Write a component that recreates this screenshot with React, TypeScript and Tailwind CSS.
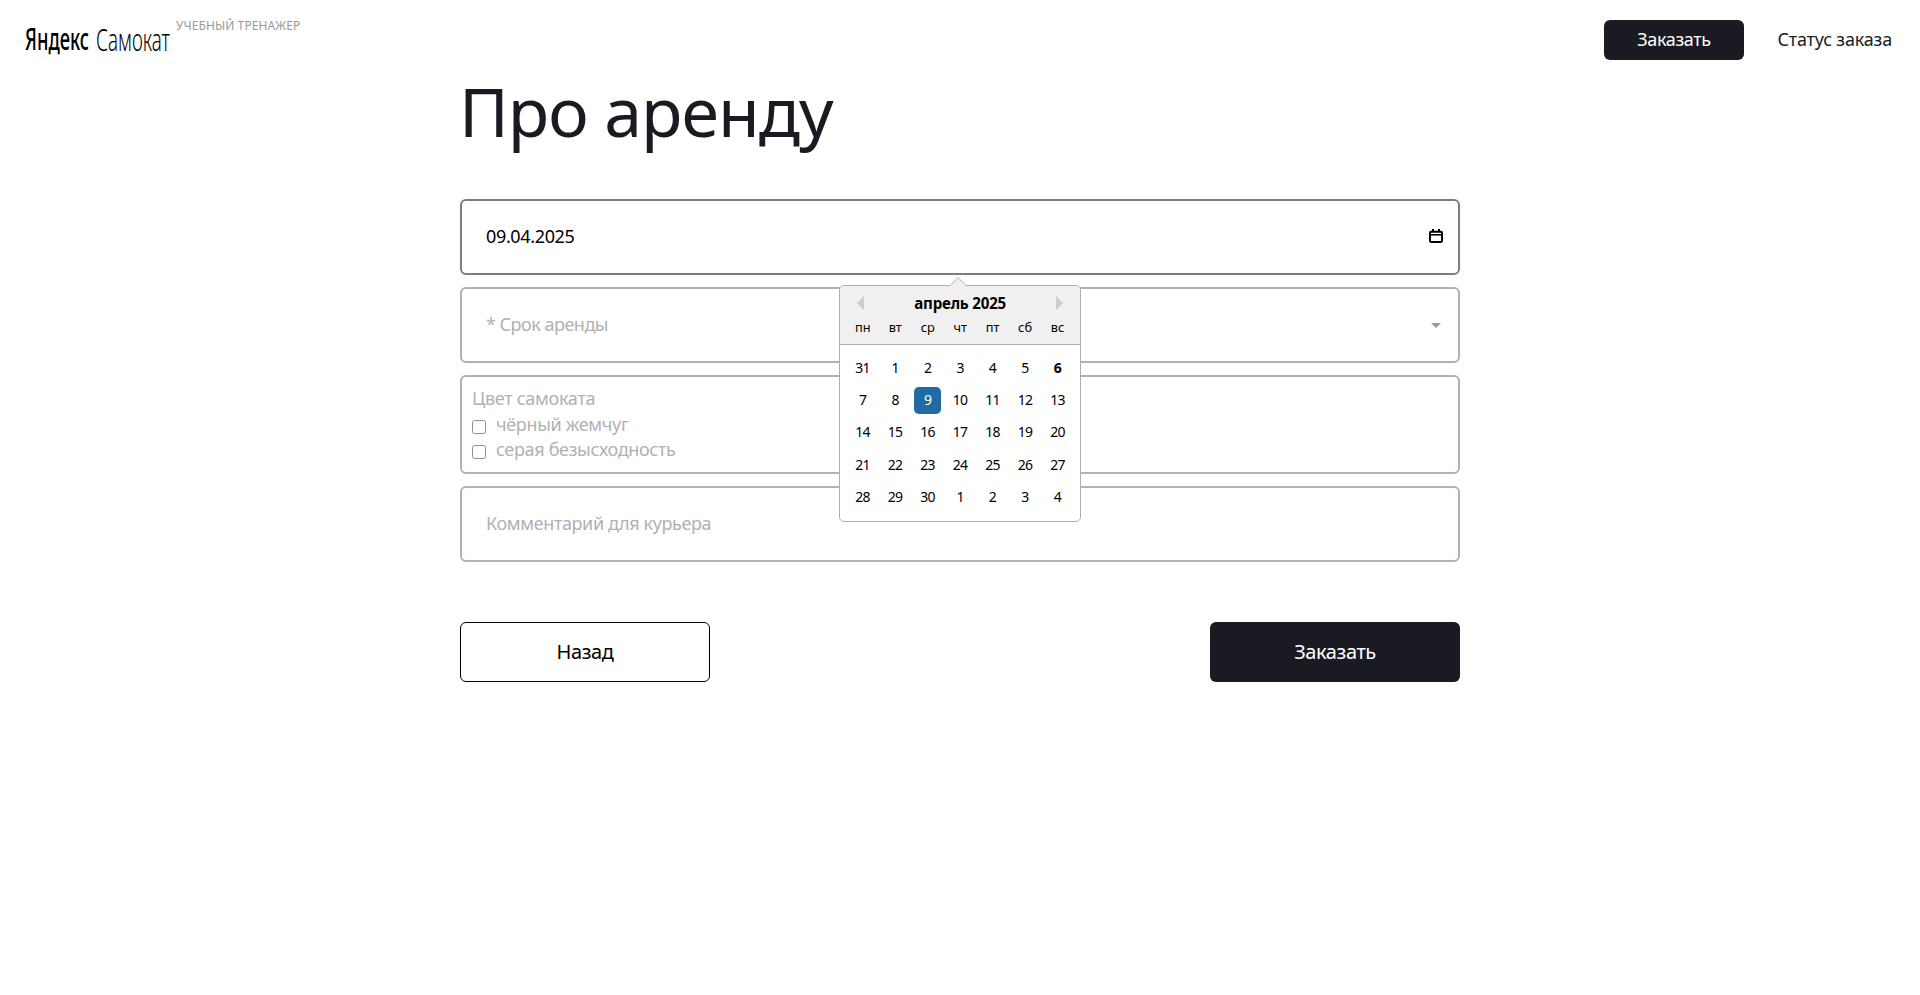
import React from "react";

const WEEKDAYS = ["пн", "вт", "ср", "чт", "пт", "сб", "вс"];

const WEEKS = [
  [31, 1, 2, 3, 4, 5, 6],
  [7, 8, 9, 10, 11, 12, 13],
  [14, 15, 16, 17, 18, 19, 20],
  [21, 22, 23, 24, 25, 26, 27],
  [28, 29, 30, 1, 2, 3, 4],
];

function Logo() {
  return (
    <svg width="146" height="56" viewBox="0 0 146 56" className="block overflow-visible">
      <text x="0" y="38" textLength="64" lengthAdjust="spacingAndGlyphs" fontFamily="'Noto Sans', sans-serif" fontSize="30.5" fontWeight="500" fill="#000">
        Яндекс
      </text>
      <text x="71" y="39" textLength="74" lengthAdjust="spacingAndGlyphs" fontFamily="'Noto Sans', sans-serif" fontSize="30.5" fontWeight="300" fill="#000">
        Самокат
      </text>
    </svg>
  );
}

function Header() {
  return (
    <header className="flex h-20 items-center justify-between">
      <div className="flex h-full">
        <div className="pt-3 pl-[25px]">
          <Logo />
        </div>
        <div className="ml-[5px] pt-[18px] text-[12px] leading-4 tracking-[0.1px] whitespace-nowrap text-[#999]">УЧЕБНЫЙ ТРЕНАЖЕР</div>
      </div>
      <nav className="flex items-center pr-7">
        <button className="h-10 w-[140px] rounded-md bg-[#1a1b22] pb-[2px] text-[18px] leading-6 tracking-[-0.35px] text-white">Заказать</button>
        <button className="ml-[33.5px] w-[114.5px] pb-[2px] text-left text-[18px] leading-6 tracking-[-0.2px] whitespace-nowrap text-[#1a1b22]">Статус заказа</button>
      </nav>
    </header>
  );
}

function Day({ day, week }: { day: number; week: number }) {
  const selected = week === 1 && day === 9;
  const today = week === 0 && day === 6;
  return (
    <div
      className={
        "m-[2.656px] h-[27.2px] w-[27.2px] text-center text-[14px] leading-[26px] tracking-[-0.7px] " +
        (selected ? "rounded-[4.8px] bg-[#216ba5] text-white" : today ? "font-bold" : "")
      }
    >
      {day}
    </div>
  );
}

function Calendar() {
  return (
    <div className="absolute top-[84px] left-[377px] z-10 w-[242.3px] rounded-[4.8px] border border-[#aeaeae] bg-white text-[12.8px] text-black">
      <svg width="18" height="10" viewBox="0 0 18 10" className="absolute -top-[9px] left-[109px]">
        <path d="M0.5 9 L9 0.5 L17.5 9 V10 H0.5 Z" fill="#f0f0f0" />
        <path d="M0.5 9 L9 0.5 L17.5 9" fill="none" stroke="#aeaeae" strokeWidth="1" />
      </svg>
      <div className="rounded-t-[4px] border-b border-[#aeaeae] bg-[#f0f0f0] pt-2">
        <div className="flex h-[18px] items-center justify-between pr-[17px] pl-[17px]">
          <svg width="7" height="14" viewBox="0 0 7 14">
            <path d="M7 0 L0 7 L7 14 Z" fill="#ccc" />
          </svg>
          <div className="text-[15.1px] leading-[18px] font-bold tracking-[-0.2px]">апрель 2025</div>
          <svg width="7" height="14" viewBox="0 0 7 14">
            <path d="M0 0 L7 7 L0 14 Z" fill="#ccc" />
          </svg>
        </div>
        <div className="flex justify-center">
          {WEEKDAYS.map((name) => (
            <div key={name} className="m-[2.656px] h-[27.2px] w-[27.2px] text-center leading-[25.2px]">
              {name}
            </div>
          ))}
        </div>
      </div>
      <div className="m-[6.4px]">
        {WEEKS.map((days, week) => (
          <div key={week} className="flex">
            {days.map((day) => (
              <Day key={day} day={day} week={week} />
            ))}
          </div>
        ))}
      </div>
    </div>
  );
}

function Checkbox({ label }: { label: string }) {
  return (
    <label className="flex h-[25px] items-center">
      <span className="mt-[5px] h-[14px] w-[14px] rounded-[2.5px] border border-[#8f8f9d] bg-white" />
      <span className="ml-[10px] leading-[25px] tracking-[-0.33px]">{label}</span>
    </label>
  );
}

export default function App() {
  return (
    <div className="h-[995px] overflow-hidden bg-white font-['Noto_Sans','Open_Sans',sans-serif]">
      <Header />
      <main className="mx-auto w-[1000px]">
        <h1 className="-ml-px h-[119px] text-[68px] leading-[62px] tracking-[-1px] whitespace-nowrap text-[#1a1b22]">Про аренду</h1>
        <form className="flex flex-col gap-3 text-[18px] text-[#adb2b5]">
          <div className="relative flex h-[76px] items-center justify-between rounded-md border-2 border-[#7b7e84] pr-[15px] pl-6 text-black">
            <span className="pb-[2px] tracking-[-0.35px]">09.04.2025</span>
            <svg width="14" height="14" viewBox="0 0 14 14" className="-mt-[2px]">
              <rect x="1" y="2.8" width="12" height="10.2" rx="1.2" fill="none" stroke="#000" strokeWidth="2" />
              <path d="M1 5.8 H13" stroke="#000" strokeWidth="1.6" />
              <path d="M4 0 V3 M10 0 V3" stroke="#000" strokeWidth="2" />
            </svg>
            <Calendar />
          </div>
          <div className="flex h-[76px] items-center justify-between rounded-md border-2 border-[#adb2b5] pr-[17px] pl-6">
            <span className="pb-px tracking-[-0.5px]">* Срок аренды</span>
            <svg width="10" height="5" viewBox="0 0 10 5">
              <path d="M0 0 H10 L5 5 Z" fill="#999" />
            </svg>
          </div>
          <div className="h-[99px] rounded-md border-2 border-[#adb2b5] pt-[9px] pl-[10px]">
            <div className="h-[26px] leading-[25px] tracking-[-0.3px]">Цвет самоката</div>
            <Checkbox label="чёрный жемчуг" />
            <Checkbox label="серая безысходность" />
          </div>
          <div className="flex h-[76px] items-center rounded-md border-2 border-[#adb2b5] pl-6">
            <span className="pb-px tracking-[-0.38px]">Комментарий для курьера</span>
          </div>
        </form>
        <div className="mt-[60px] flex justify-between text-[20px] tracking-[-0.4px]">
          <button className="h-[60px] w-[250px] rounded-md border border-black bg-white text-black">Назад</button>
          <button className="h-[60px] w-[250px] rounded-md bg-[#1a1b22] text-white">Заказать</button>
        </div>
      </main>
    </div>
  );
}
